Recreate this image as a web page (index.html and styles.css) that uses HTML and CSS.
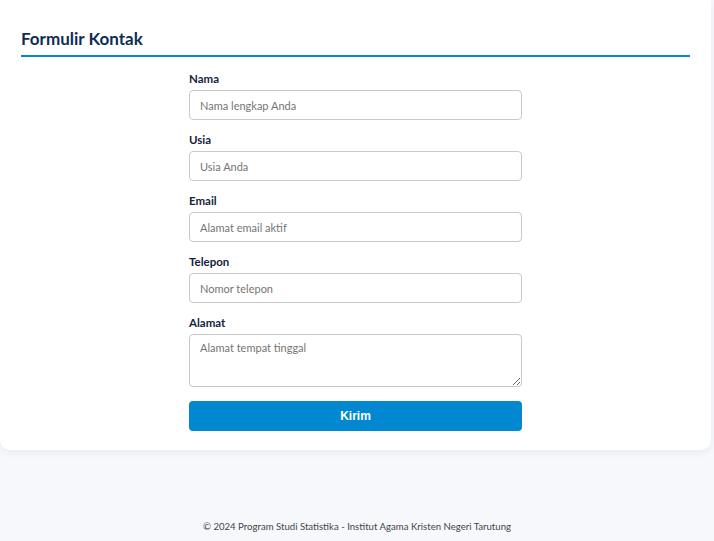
FILE: index.html
```html
<!DOCTYPE html>
<html lang="id">
<head>
<meta charset="utf-8">
<title>Formulir Kontak</title>
<link rel="stylesheet" href="styles.css">
</head>
<body>
<main class="card">
  <h2 class="card-title">Formulir Kontak</h2>
  <form class="contact-form">
    <div class="field">
      <label for="nama">Nama</label>
      <input id="nama" type="text" placeholder="Nama lengkap Anda">
    </div>
    <div class="field">
      <label for="usia">Usia</label>
      <input id="usia" type="text" placeholder="Usia Anda">
    </div>
    <div class="field">
      <label for="email">Email</label>
      <input id="email" type="text" placeholder="Alamat email aktif">
    </div>
    <div class="field">
      <label for="telepon">Telepon</label>
      <input id="telepon" type="text" placeholder="Nomor telepon">
    </div>
    <div class="field field-last">
      <label for="alamat">Alamat</label>
      <textarea id="alamat" placeholder="Alamat tempat tinggal"></textarea>
    </div>
    <button type="button" class="submit">Kirim</button>
  </form>
</main>
<footer class="footer">© 2024 Program Studi Statistika - Institut Agama Kristen Negeri Tarutung</footer>
</body>
</html>
```
FILE: styles.css
```css
html, body {
  margin: 0;
  padding: 0;
}
body {
  background: #f7f8fc;
  font-family: Lato, "Open Sans", sans-serif;
  color: #1a2538;
}
.card {
  background: #fff;
  margin-right: 3px;
  border-radius: 0 0 10px 10px;
  box-shadow: 0 2px 8px rgba(20, 40, 90, 0.07);
  padding: 29px 21px 19px;
}
.card-title {
  margin: 0;
  font-size: 17px;
  font-weight: 700;
  line-height: 20px;
  color: #0d2d55;
  padding-bottom: 6px;
  border-bottom: 2px solid #0288d1;
}
.contact-form {
  width: 333px;
  margin: 0 auto;
  padding-top: 15px;
}
.field {
  margin-bottom: 13px;
}
.field label {
  display: block;
  font-size: 11.5px;
  font-weight: 700;
  line-height: 14px;
  color: #13243d;
  margin-bottom: 4px;
}
.field input,
.field textarea {
  display: block;
  box-sizing: border-box;
  width: 100%;
  height: 30px;
  border: 1px solid #c9c9c9;
  border-radius: 4px;
  padding: 0 10px;
  font-family: inherit;
  font-size: 11px;
  color: #333;
  background: #fff;
  margin: 0;
}
.field textarea {
  height: 53px;
  padding: 6px 10px;
  resize: vertical;
}
.field input::placeholder,
.field textarea::placeholder {
  color: #757575;
}
.field-last {
  margin-bottom: 14px;
}
.submit {
  display: block;
  width: 100%;
  height: 30px;
  border: none;
  border-radius: 4px;
  background: #0288d1;
  color: #fff;
  font-family: "Liberation Sans", Arial, sans-serif;
  font-size: 12px;
  font-weight: 700;
  cursor: pointer;
}
.footer {
  text-align: center;
  font-size: 9.6px;
  color: #444;
  margin-top: 70px;
  line-height: 14px;
}
```
